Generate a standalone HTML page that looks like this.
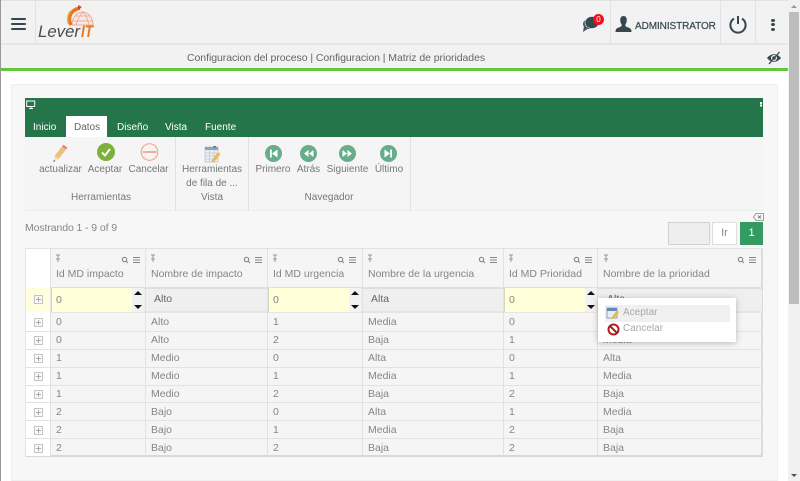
<!DOCTYPE html>
<html><head><meta charset="utf-8"><style>
html,body{margin:0;padding:0;width:800px;height:481px;overflow:hidden;background:#fff}
body{font-family:"Liberation Sans",sans-serif;position:relative}
div,span,svg{position:absolute;box-sizing:border-box}
.t{white-space:nowrap;line-height:14px}
.g{font-size:10.5px;color:#868686}
.h{font-size:10.5px;color:#858585;top:267px}
.r{font-size:10px;color:#777;text-align:center;white-space:nowrap;line-height:13px}
.tab{top:121px;font-size:10px;color:#fff;white-space:nowrap;line-height:14px}
.v{width:1px;background:#e2e2e2}
.hl{height:1px;background:#e2e2e2;left:25px;width:738px}
.box{width:9px;height:9px;border:1px solid #c4c4c4;left:34px;background:#fafafa}
.box:before{content:"";position:absolute;left:1px;top:3px;width:5px;height:1px;background:#aaa}
.box:after{content:"";position:absolute;left:3px;top:1px;width:1px;height:5px;background:#aaa}
.inp{top:288px;height:24px;background:#ffffd9;border-left:1px solid #d8d8c0}
.spin{width:12px;top:288px;height:24px;background:#f2f2f2}
.spin:before{content:"";position:absolute;left:2px;top:3px;border:4px solid transparent;border-top:0;border-bottom:4px solid #111}
.spin:after{content:"";position:absolute;left:2px;top:17px;border:4px solid transparent;border-bottom:0;border-top:4px solid #111}
</style></head><body>
<!-- left edge -->
<div style="left:0;top:0;width:1px;height:481px;background:#999"></div>
<!-- header -->
<div style="left:1px;top:0;width:787px;height:45px;background:#f2f2f2;border-top:1px solid #e2e2e2;border-bottom:2px solid #e6e6e6"></div>
<div class="v" style="left:35px;top:1px;height:42px"></div>
<div class="v" style="left:610px;top:1px;height:42px"></div>
<div class="v" style="left:720px;top:1px;height:42px"></div>
<div class="v" style="left:755px;top:1px;height:42px"></div>
<div style="left:11px;top:18px;width:15px;height:2.4px;background:#37474f;border-radius:1px"></div>
<div style="left:11px;top:23px;width:15px;height:2.4px;background:#37474f;border-radius:1px"></div>
<div style="left:11px;top:28px;width:15px;height:2.4px;background:#37474f;border-radius:1px"></div>
<!-- logo -->
<svg style="left:36px;top:4px" width="62" height="36" viewBox="0 0 62 36">
<path d="M36 21 A10.500 13 0 0 1 57 21 Z" fill="#f6e8e0" stroke="#e8a088" stroke-width=".8"/>
<path d="M40 21 Q43 12 47 8 Q51 12 53 21 M36.500 17 H56.500 M39 12 H54" fill="none" stroke="#e8a088" stroke-width=".7"/>
<path d="M35 21 C31 13 35 6 44 4" fill="none" stroke="#e87722" stroke-width="3.500"/>
<path d="M32.500 20 C31 14 32 10 35 7" fill="none" stroke="#f0a030" stroke-width="1.500"/>
<path d="M42 1 L46 3 L42 6 Z" fill="#d9442a"/>
<text x="2" y="33" font-family="Liberation Sans" font-style="italic" font-size="17" fill="#4d4d4d" textLength="42" lengthAdjust="spacingAndGlyphs">Lever</text>
<text x="45" y="33" font-family="Liberation Sans" font-style="italic" font-weight="bold" font-size="17" fill="#e87722" textLength="12" lengthAdjust="spacingAndGlyphs">IT</text>
</svg>
<!-- chat -->
<svg style="left:581px;top:14px" width="20" height="20" viewBox="0 0 20 20">
<ellipse cx="8" cy="10" rx="6" ry="5" fill="#455a64"/>
<ellipse cx="11" cy="8.5" rx="7" ry="6" fill="#37474f" stroke="#f2f2f2" stroke-width=".6"/>
<path d="M3 12 L2 18 L8 14 Z" fill="#455a64"/>
</svg>
<div style="left:593px;top:14px;width:11px;height:11px;background:#f01020;border-radius:50%;color:#fff;font-size:8px;line-height:11px;text-align:center">0</div>
<!-- user -->
<svg style="left:615px;top:16px" width="17" height="17" viewBox="0 0 17 17">
<path d="M8.5 0 C5.5 0 5 3 5.3 5 C5.5 7 6.3 8 6.8 9 C6.8 10.5 5 11 2.5 12 C1 12.6 .5 14 .5 16 H16.5 C16.5 14 16 12.6 14.5 12 C12 11 10.2 10.5 10.2 9 C10.7 8 11.5 7 11.7 5 C12 3 11.5 0 8.5 0 Z" fill="#37474f"/>
</svg>
<div class="t" style="left:635px;top:20px;font-size:10px;color:#37474f;letter-spacing:-.08px;-webkit-text-stroke:.2px #37474f">ADMINISTRATOR</div>
<!-- power -->
<svg style="left:729px;top:15px" width="18" height="19" viewBox="0 0 18 19">
<path d="M5 3.6 A7.6 7.6 0 1 0 13 3.6" fill="none" stroke="#37474f" stroke-width="2"/>
<path d="M9 1 V9" fill="none" stroke="#37474f" stroke-width="2"/>
</svg>
<div style="left:771px;top:18.500px;width:4px;height:3px;background:#37474f;border-radius:50%"></div>
<div style="left:771px;top:23px;width:4px;height:3px;background:#37474f;border-radius:50%"></div>
<div style="left:771px;top:27.500px;width:4px;height:3px;background:#37474f;border-radius:50%"></div>
<!-- breadcrumb -->
<div style="left:1px;top:45px;width:787px;height:23px;background:#f2f2f2"></div>
<div class="t" style="left:187px;top:51px;font-size:10.5px;color:#666;letter-spacing:-.06px">Configuracion del proceso | Configuracion | Matriz de prioridades</div>
<svg style="left:766px;top:51px" width="16" height="14" viewBox="0 0 16 14">
<path d="M1 7 C5 2 11 2 15 7 C11 12 5 12 1 7 Z" fill="#37474f"/>
<circle cx="8" cy="7" r="3" fill="#f2f2f2"/><circle cx="8" cy="7" r="1.800" fill="#37474f"/>
<path d="M13.500 1 L3 13" stroke="#37474f" stroke-width="1.300"/>
</svg>
<div style="left:1px;top:68px;width:787px;height:3px;background:#62c738"></div>
<!-- panel -->
<div style="left:11px;top:84px;width:767px;height:397px;background:#f7f7f7;border:1px solid #efefef"></div>
<!-- green banner -->
<div style="left:25px;top:98px;width:738px;height:39px;background:#25754a"></div>
<svg style="left:26px;top:100px" width="10" height="10" viewBox="0 0 10 10"><rect x=".7" y="1" width="8" height="5.500" fill="none" stroke="#fff" stroke-width="1"/><path d="M3 8.500 H7 M5 6.500 V8.500" stroke="#fff"/></svg>
<div style="left:760px;top:102px;width:1.500px;height:1.500px;background:#fff;box-shadow:0 2.500px #fff"></div>
<div style="left:66px;top:116px;width:41px;height:22px;background:#fff"></div>
<div class="tab" style="left:33px">Inicio</div>
<div class="tab" style="left:74px;color:#666">Datos</div>
<div class="tab" style="left:117px">Diseño</div>
<div class="tab" style="left:165px">Vista</div>
<div class="tab" style="left:205px">Fuente</div>
<!-- ribbon -->
<div style="left:25px;top:137px;width:738px;height:74px;background:#f5f5f5;border-bottom:1px solid #ececec"></div>
<div class="v" style="left:175px;top:137px;height:74px"></div>
<div class="v" style="left:248px;top:137px;height:74px"></div>
<div class="v" style="left:410px;top:137px;height:74px"></div>
<!-- pencil -->
<svg style="left:52px;top:144px" width="16" height="19" viewBox="0 0 16 19">
<path d="M2.500 12 L10 2.500 L14 5.500 L6.500 15 Z" fill="#efc078"/>
<path d="M10 2.500 L11.500 .8 L15.500 3.800 L14 5.500 Z" fill="#e9807a"/>
<path d="M2.500 12 L1.500 18 L6.500 15 Z" fill="#f2e2c8"/><path d="M1.800 16 L1.500 18 L3.200 17 Z" fill="#444"/>
</svg>
<!-- check -->
<svg style="left:97px;top:143px" width="18" height="18" viewBox="0 0 18 18">
<circle cx="9" cy="9" r="9" fill="#7eb03c"/><path d="M18 9 A9 9 0 0 1 9 18 A9 9 0 0 0 18 9" fill="#6aa0b0"/>
<path d="M5 9.500 L8 12.500 L13 6" fill="none" stroke="#fff" stroke-width="2"/>
</svg>
<!-- cancel -->
<svg style="left:140px;top:143px" width="19" height="18" viewBox="0 0 19 18">
<circle cx="9.500" cy="9" r="8.300" fill="#f9f3ef" stroke="#eea08c" stroke-width="1"/><path d="M2.500 9 H16.500" stroke="#e98a76" stroke-width="1.300"/>
</svg>
<div class="r" style="left:39px;top:163px;width:43px">actualizar</div>
<div class="r" style="left:87px;top:163px;width:36px">Aceptar</div>
<div class="r" style="left:128px;top:163px;width:41px">Cancelar</div>
<div class="r" style="left:50px;top:191px;width:102px">Herramientas</div>
<!-- table tool icon -->
<svg style="left:204px;top:145px" width="17" height="18" viewBox="0 0 17 18">
<rect x="1" y="2" width="13" height="15" fill="#e8eef2" stroke="#a8b8c4" stroke-width=".6"/>
<rect x="1" y="2" width="13" height="3" fill="#8ba4b8"/>
<path d="M1 8 H14 M1 11 H14 M1 14 H14 M5.500 5 V17 M10 5 V17" stroke="#b4c2cc" stroke-width=".6"/>
<path d="M8 15 L14 7 L16.500 9 L10.500 16.500 L7.500 17 Z" fill="#efb950"/>
<path d="M9 1 L12 1 L11 3 Z" fill="#557"/>
</svg>
<div class="r" style="left:176px;top:163px;width:72px">Herramientas</div>
<div class="r" style="left:176px;top:177px;width:72px">de fila de ...</div>
<div class="r" style="left:176px;top:191px;width:72px">Vista</div>
<!-- nav icons -->
<svg style="left:265px;top:145px" width="17" height="17" viewBox="0 0 17 17"><circle cx="8.500" cy="8.500" r="8.500" fill="#66ad8a"/><path d="M5 4.500 H6.800 V12.500 H5 Z M12.500 4.500 V12.500 L7 8.500 Z" fill="#fff"/></svg>
<svg style="left:300px;top:145px" width="17" height="17" viewBox="0 0 17 17"><circle cx="8.500" cy="8.500" r="8.500" fill="#66ad8a"/><path d="M8.500 5 V12 L4 8.500 Z M13.500 5 V12 L9 8.500 Z" fill="#fff"/></svg>
<svg style="left:339px;top:145px" width="17" height="17" viewBox="0 0 17 17"><circle cx="8.500" cy="8.500" r="8.500" fill="#66ad8a"/><path d="M3.500 5 V12 L8 8.500 Z M8.500 5 V12 L13 8.500 Z" fill="#fff"/></svg>
<svg style="left:380px;top:145px" width="17" height="17" viewBox="0 0 17 17"><circle cx="8.500" cy="8.500" r="8.500" fill="#66ad8a"/><path d="M12 4.500 H10.200 V12.500 H12 Z M4.500 4.500 V12.500 L10 8.500 Z" fill="#fff"/></svg>
<div class="r" style="left:253px;top:163px;width:40px">Primero</div>
<div class="r" style="left:295px;top:163px;width:27px">Atrás</div>
<div class="r" style="left:326px;top:163px;width:43px">Siguiente</div>
<div class="r" style="left:373px;top:163px;width:32px">Último</div>
<div class="r" style="left:250px;top:191px;width:158px">Navegador</div>
<!-- paging -->
<div class="t g" style="left:25px;top:221px;letter-spacing:-.1px">Mostrando 1 - 9 of 9</div>
<svg style="left:753px;top:213px" width="11" height="8" viewBox="0 0 11 8"><path d="M3 .5 H10.500 V7.500 H3 L.5 4 Z" fill="none" stroke="#888" stroke-width=".8"/><path d="M5 2.500 L8 5.500 M8 2.500 L5 5.500" stroke="#666" stroke-width=".8"/></svg>
<div style="left:668px;top:222px;width:42px;height:23px;background:#eeeeee;border:1px solid #ccd4d8"></div>
<div style="left:712px;top:222px;width:25px;height:23px;background:#fff;border:1px solid #ddd;font-size:11px;color:#888;text-align:center;line-height:21px">Ir</div>
<div style="left:740px;top:222px;width:23px;height:23px;background:#339b62;color:#fff;font-size:11px;text-align:center;line-height:23px">1</div>
<!-- table -->
<div style="left:25px;top:248px;width:738px;height:209px;background:#f5f5f5;border:1px solid #e2e2e2;border-bottom:2px solid #d8d8d8;border-right:2px solid #dcdcdc"></div>
<div style="left:26px;top:249px;width:24px;height:207px;background:#fff"></div>
<div style="left:26px;top:288px;width:24px;height:24px;background:#ffffe0"></div>
<div style="left:50px;top:287px;width:712px;height:26px;background:#efefef;border-top:2px solid #dedede;border-bottom:2px solid #e6e6e0"></div>
<div class="v" style="left:50px;top:249px;height:207px"></div>
<div class="v" style="left:145px;top:249px;height:207px"></div>
<div class="v" style="left:267px;top:249px;height:207px"></div>
<div class="v" style="left:362px;top:249px;height:207px"></div>
<div class="v" style="left:503px;top:249px;height:207px"></div>
<div class="v" style="left:597px;top:249px;height:207px"></div>
<div class="hl" style="top:331px"></div><div class="hl" style="top:349px"></div><div class="hl" style="top:367px"></div><div class="hl" style="top:385px"></div><div class="hl" style="top:402px"></div><div class="hl" style="top:420px"></div><div class="hl" style="top:438px"></div>
<!-- edit inputs -->
<div class="inp" style="left:51px;width:81px"></div><div class="spin" style="left:132px"></div>
<div class="inp" style="left:268px;width:81px"></div><div class="spin" style="left:349px"></div>
<div class="inp" style="left:504px;width:81px"></div><div class="spin" style="left:585px"></div>
<!-- headers -->
<div class="t h" style="left:56px">Id MD impacto</div>
<div class="t h" style="left:151px">Nombre de impacto</div>
<div class="t h" style="left:273px">Id MD urgencia</div>
<div class="t h" style="left:368px">Nombre de la urgencia</div>
<div class="t h" style="left:509px">Id MD Prioridad</div>
<div class="t h" style="left:603px">Nombre de la prioridad</div>
<!-- header icons -->
<svg style="left:0;top:0" width="800" height="481" viewBox="0 0 800 481">
<g fill="#999" stroke="#999">
<path d="M56 255 H60 M58 255 V262 M56 259 H60" stroke-width="1"/><path d="M151 255 H155 M153 255 V262 M151 259 H155" stroke-width="1"/><path d="M273 255 H277 M275 255 V262 M273 259 H277" stroke-width="1"/><path d="M368 255 H372 M370 255 V262 M368 259 H372" stroke-width="1"/><path d="M509 255 H513 M511 255 V262 M509 259 H513" stroke-width="1"/><path d="M604 255 H608 M606 255 V262 M604 259 H608" stroke-width="1"/>
</g>
<g fill="none" stroke="#888" stroke-width="1.100">
<g transform="translate(122,257)"><circle cx="2.500" cy="2.500" r="2.200"/><path d="M4 4 L6 6"/><path d="M11 0 H18 M11 2.500 H18 M11 5 H18" transform="translate(0,.5)"/></g>
<g transform="translate(244,257)"><circle cx="2.500" cy="2.500" r="2.200"/><path d="M4 4 L6 6"/><path d="M11 0 H18 M11 2.500 H18 M11 5 H18" transform="translate(0,.5)"/></g>
<g transform="translate(338,257)"><circle cx="2.500" cy="2.500" r="2.200"/><path d="M4 4 L6 6"/><path d="M11 0 H18 M11 2.500 H18 M11 5 H18" transform="translate(0,.5)"/></g>
<g transform="translate(479,257)"><circle cx="2.500" cy="2.500" r="2.200"/><path d="M4 4 L6 6"/><path d="M11 0 H18 M11 2.500 H18 M11 5 H18" transform="translate(0,.5)"/></g>
<g transform="translate(574,257)"><circle cx="2.500" cy="2.500" r="2.200"/><path d="M4 4 L6 6"/><path d="M11 0 H18 M11 2.500 H18 M11 5 H18" transform="translate(0,.5)"/></g>
<g transform="translate(738,257)"><circle cx="2.500" cy="2.500" r="2.200"/><path d="M4 4 L6 6"/><path d="M11 0 H18 M11 2.500 H18 M11 5 H18" transform="translate(0,.5)"/></g>
</g>
</svg>
<!-- edit row -->
<div class="box" style="top:295px"></div>
<div class="t g" style="left:56px;top:293px">0</div>
<div class="t g" style="left:154px;top:292px;color:#666">Alto</div>
<div class="t g" style="left:273px;top:293px">0</div>
<div class="t g" style="left:371px;top:292px;color:#666">Alta</div>
<div class="t g" style="left:509px;top:293px">0</div>
<div class="t g" style="left:607px;top:292px;color:#666">Alta</div>
<!-- rows -->
<div class="box" style="top:318px"></div><div class="box" style="top:336px"></div><div class="box" style="top:354px"></div><div class="box" style="top:372px"></div><div class="box" style="top:390px"></div><div class="box" style="top:408px"></div><div class="box" style="top:426px"></div><div class="box" style="top:444px"></div>
<div class="t g" style="left:56px;top:315px">0</div><div class="t g" style="left:151px;top:315px">Alto</div><div class="t g" style="left:273px;top:315px">1</div><div class="t g" style="left:368px;top:315px">Media</div><div class="t g" style="left:509px;top:315px">0</div>
<div class="t g" style="left:56px;top:333px">0</div><div class="t g" style="left:151px;top:333px">Alto</div><div class="t g" style="left:273px;top:333px">2</div><div class="t g" style="left:368px;top:333px">Baja</div><div class="t g" style="left:509px;top:333px">1</div><div class="t g" style="left:603px;top:333px">Media</div>
<div class="t g" style="left:56px;top:351px">1</div><div class="t g" style="left:151px;top:351px">Medio</div><div class="t g" style="left:273px;top:351px">0</div><div class="t g" style="left:368px;top:351px">Alta</div><div class="t g" style="left:509px;top:351px">0</div><div class="t g" style="left:603px;top:351px">Alta</div>
<div class="t g" style="left:56px;top:369px">1</div><div class="t g" style="left:151px;top:369px">Medio</div><div class="t g" style="left:273px;top:369px">1</div><div class="t g" style="left:368px;top:369px">Media</div><div class="t g" style="left:509px;top:369px">1</div><div class="t g" style="left:603px;top:369px">Media</div>
<div class="t g" style="left:56px;top:387px">1</div><div class="t g" style="left:151px;top:387px">Medio</div><div class="t g" style="left:273px;top:387px">2</div><div class="t g" style="left:368px;top:387px">Baja</div><div class="t g" style="left:509px;top:387px">2</div><div class="t g" style="left:603px;top:387px">Baja</div>
<div class="t g" style="left:56px;top:405px">2</div><div class="t g" style="left:151px;top:405px">Bajo</div><div class="t g" style="left:273px;top:405px">0</div><div class="t g" style="left:368px;top:405px">Alta</div><div class="t g" style="left:509px;top:405px">1</div><div class="t g" style="left:603px;top:405px">Media</div>
<div class="t g" style="left:56px;top:423px">2</div><div class="t g" style="left:151px;top:423px">Bajo</div><div class="t g" style="left:273px;top:423px">1</div><div class="t g" style="left:368px;top:423px">Media</div><div class="t g" style="left:509px;top:423px">2</div><div class="t g" style="left:603px;top:423px">Baja</div>
<div class="t g" style="left:56px;top:441px">2</div><div class="t g" style="left:151px;top:441px">Bajo</div><div class="t g" style="left:273px;top:441px">2</div><div class="t g" style="left:368px;top:441px">Baja</div><div class="t g" style="left:509px;top:441px">2</div><div class="t g" style="left:603px;top:441px">Baja</div>
<!-- popup -->
<div style="left:598px;top:298px;width:138px;height:44px;background:#fff;box-shadow:0 1px 6px rgba(0,0,0,.25)"></div>
<div style="left:605px;top:305px;width:125px;height:17px;background:#f0f0f0"></div>
<svg style="left:606px;top:306px" width="14" height="14" viewBox="0 0 14 14"><rect x="1" y="2" width="10" height="10" fill="#e8eef4" stroke="#6f94bc" stroke-width=".8"/><rect x="1" y="2" width="10" height="3" fill="#5f8cc0"/><path d="M6 11 L11 4 L13 6 L8 12.500 L5.500 13 Z" fill="#e9b64a"/></svg>
<svg style="left:607px;top:323px" width="13" height="13" viewBox="0 0 13 13"><circle cx="6.500" cy="6.500" r="5" fill="#fff" stroke="#a82020" stroke-width="2"/><path d="M3 3 L10 10" stroke="#a82020" stroke-width="2"/></svg>
<div class="t" style="left:623px;top:306px;font-size:10px;color:#a8a8a8">Aceptar</div>
<div class="t" style="left:623px;top:322px;font-size:10px;color:#a8a8a8">Cancelar</div>
<!-- scrollbar -->
<div style="left:788px;top:0;width:12px;height:481px;background:#f1f1f1"></div>
<div style="left:789px;top:12px;width:10px;height:292px;background:#bdbdbd"></div>
<div style="left:791px;top:5px;width:0;height:0;border:3px solid transparent;border-top:0;border-bottom:3px solid #999"></div>
<div style="left:791px;top:474px;width:0;height:0;border:3px solid transparent;border-bottom:0;border-top:3px solid #555"></div>
</body></html>
